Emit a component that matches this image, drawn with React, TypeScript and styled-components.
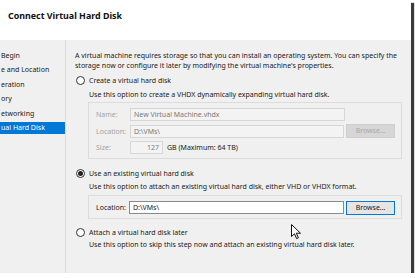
import styled, {createGlobalStyle, css} from "styled-components";

const GlobalStyle = createGlobalStyle`
  html, body {
    margin: 0;
    padding: 0;
    background: #fff;
  }

  body {
    font-family: "Noto Sans", "Open Sans", sans-serif;
    font-size: 7px;
    color: #1a1a1a;
  }
`;

const Frame = styled.div`
  position: relative;
  width: 411px;
  height: 273px;
  display: flex;
  flex-direction: column;
  box-shadow: 3px 3px 1px #3a3a3a;
  overflow: hidden;
`;

const Header = styled.div`
  height: 40px;
  background: #fff;
  padding: 10px 0 0 8px;
  box-sizing: border-box;
`;

const Title = styled.div`
  font-size: 8.9px;
  font-weight: 700;
  line-height: 12px;
  color: #111;
`;

const Body = styled.div`
  flex: 1;
  display: flex;
  background: #f0f0f0;
`;

const Nav = styled.div`
  width: 66px;
  box-sizing: border-box;
  border-right: 1px solid #dcdcdc;
  padding-top: 10px;
  display: flex;
  flex-direction: column;
  gap: 2.4px;
`;

const NavItem = styled.div<{ $active?: boolean }>`
  height: 12px;
  line-height: 12px;
  width: 65px;
  white-space: nowrap;
  overflow: hidden;
  padding-left: 1px;
  box-sizing: border-box;
  ${({$active}) => $active && css`
    background: #0078d7;
    color: #fff;
  `}
`;

const Main = styled.div`
  flex: 1;
  padding: 11px 0 0 9px;
  display: flex;
  flex-direction: column;
`;

const Text = styled.div<{ $indent?: boolean; $mt?: number }>`
  line-height: 10px;
  white-space: nowrap;
  padding-left: ${({$indent}) => ($indent ? 14 : 0)}px;
  margin-top: ${({$mt}) => $mt ?? 0}px;
`;

const RadioRow = styled.label<{ $mt: number }>`
  display: flex;
  align-items: center;
  gap: 4px;
  height: 10px;
  margin-top: ${({$mt}) => $mt}px;
  padding-left: 1px;
  white-space: nowrap;
`;

const Radio = styled.span<{ $checked?: boolean }>`
  width: 9px;
  height: 9px;
  box-sizing: border-box;
  border-radius: 50%;
  border: 1px solid #333;
  background: #fff;
  display: flex;
  align-items: center;
  justify-content: center;

  &::after {
    content: "";
    width: 5px;
    height: 5px;
    border-radius: 50%;
    background: ${({$checked}) => ($checked ? "#222" : "transparent")};
  }
`;

const GroupBox = styled.div<{ $mt: number }>`
  margin-top: ${({$mt}) => $mt}px;
  margin-left: 13px;
  width: 314px;
  box-sizing: border-box;
  border: 1px solid #dcdcdc;
  padding: 5px 6px 4px 7px;
  display: flex;
  flex-direction: column;
  gap: 3.5px;
`;

const FieldRow = styled.div`
  display: flex;
  align-items: center;
  height: 13px;
  white-space: nowrap;
`;

const FieldLabel = styled.span<{ $disabled?: boolean; $width: number }>`
  width: ${({$width}) => $width}px;
  color: ${({$disabled}) => ($disabled ? "#a3a3a3" : "#1a1a1a")};
`;

const Input = styled.div<{ $disabled?: boolean; $width: number; $right?: boolean }>`
  width: ${({$width}) => $width}px;
  height: 13px;
  box-sizing: border-box;
  line-height: 11px;
  padding: 0 3px;
  border: 1px solid ${({$disabled}) => ($disabled ? "#d6d6d6" : "#8a8a8a")};
  background: ${({$disabled}) => ($disabled ? "#f3f3f3" : "#fff")};
  color: ${({$disabled}) => ($disabled ? "#7a7a7a" : "#1a1a1a")};
  text-align: ${({$right}) => ($right ? "right" : "left")};
`;

const BrowseButton = styled.div<{ $disabled?: boolean }>`
  margin-left: 2px;
  width: 49px;
  height: 14px;
  box-sizing: border-box;
  line-height: 12px;
  text-align: center;
  border: 1px solid ${({$disabled}) => ($disabled ? "#cfcfcf" : "#0078d7")};
  background: ${({$disabled}) => ($disabled ? "#d6d6d6" : "#e5e5e5")};
  color: ${({$disabled}) => ($disabled ? "#a8a8a8" : "#1a1a1a")};
`;

const Unit = styled.span`
  margin-left: 4px;
`;

const Pointer = styled.svg`
  position: absolute;
  left: 291px;
  top: 224px;
`;

const navItems = ["Begin", "e and Location", "eration", "ory", "etworking", "ual Hard Disk"];

const App = () => {
    return (
        <>
            <GlobalStyle/>
            <Frame>
                <Header>
                    <Title>Connect Virtual Hard Disk</Title>
                </Header>
                <Body>
                    <Nav>
                        {navItems.map((item, index) => (
                            <NavItem key={item} $active={index === navItems.length - 1}>{item}</NavItem>
                        ))}
                    </Nav>
                    <Main>
                        <Text>A virtual machine requires storage so that you can install an operating system. You can specify the</Text>
                        <Text>storage now or configure it later by modifying the virtual machine's properties.</Text>

                        <RadioRow $mt={4}><Radio/>Create a virtual hard disk</RadioRow>
                        <Text $indent $mt={5}>Use this option to create a VHDX dynamically expanding virtual hard disk.</Text>
                        <GroupBox $mt={2}>
                            <FieldRow>
                                <FieldLabel $disabled $width={34}>Name:</FieldLabel>
                                <Input $disabled $width={215}>New Virtual Machine.vhdx</Input>
                            </FieldRow>
                            <FieldRow>
                                <FieldLabel $disabled $width={34}>Location:</FieldLabel>
                                <Input $disabled $width={215}>D:\VMs\</Input>
                                <BrowseButton $disabled>Browse...</BrowseButton>
                            </FieldRow>
                            <FieldRow>
                                <FieldLabel $disabled $width={34}>Size:</FieldLabel>
                                <Input $disabled $right $width={33}>127</Input>
                                <Unit>GB (Maximum: 64 TB)</Unit>
                            </FieldRow>
                        </GroupBox>

                        <RadioRow $mt={9}><Radio $checked/>Use an existing virtual hard disk</RadioRow>
                        <Text $indent $mt={4}>Use this option to attach an existing virtual hard disk, either VHD or VHDX format.</Text>
                        <GroupBox $mt={3}>
                            <FieldRow>
                                <FieldLabel $width={33}>Location:</FieldLabel>
                                <Input $width={216}>D:\VMs\</Input>
                                <BrowseButton>Browse...</BrowseButton>
                            </FieldRow>
                        </GroupBox>

                        <RadioRow $mt={8}><Radio/>Attach a virtual hard disk later</RadioRow>
                        <Text $indent $mt={3}>Use this option to skip this step now and attach an existing virtual hard disk later.</Text>
                    </Main>
                </Body>
                <Pointer width="11" height="16" viewBox="0 0 11 16">
                    <path d="M0.5 0.5 L0.5 12.5 L3.5 9.8 L5.6 14.6 L7.4 13.8 L5.3 9.2 L9.5 9.2 Z"
                          fill="#fff" stroke="#111" strokeWidth="1" strokeLinejoin="round"/>
                </Pointer>
            </Frame>
        </>
    );
};

export default App;
